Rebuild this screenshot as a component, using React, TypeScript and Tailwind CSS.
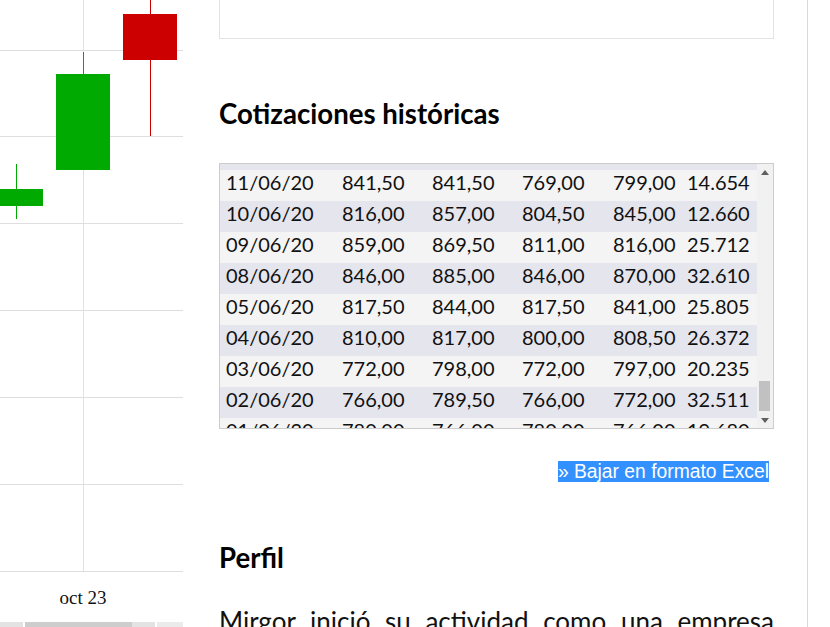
import React from 'react';

const rows: string[][] = [
  ['12/06/20', '790,00', '845,00', '785,00', '841,50', '18.203'],
  ['11/06/20', '841,50', '841,50', '769,00', '799,00', '14.654'],
  ['10/06/20', '816,00', '857,00', '804,50', '845,00', '12.660'],
  ['09/06/20', '859,00', '869,50', '811,00', '816,00', '25.712'],
  ['08/06/20', '846,00', '885,00', '846,00', '870,00', '32.610'],
  ['05/06/20', '817,50', '844,00', '817,50', '841,00', '25.805'],
  ['04/06/20', '810,00', '817,00', '800,00', '808,50', '26.372'],
  ['03/06/20', '772,00', '798,00', '772,00', '797,00', '20.235'],
  ['02/06/20', '766,00', '789,50', '766,00', '772,00', '32.511'],
  ['01/06/20', '780,00', '766,00', '780,00', '766,00', '19.680'],
];

const Chart: React.FC = () => {
  const hLines = [50, 136, 223, 310, 397, 484, 571];
  return (
    <svg width="183" height="627" className="block">
      {hLines.map((y) => (
        <line key={y} x1={0} x2={183} y1={y + 0.5} y2={y + 0.5} stroke="#dedede" />
      ))}
      <line x1={83.5} x2={83.5} y1={0} y2={571} stroke="#e2e2e2" />

      {/* candles */}
      <line x1={16.5} x2={16.5} y1={164} y2={219} stroke="#00aa00" />
      <rect x={0} y={189} width={43} height={17} fill="#00aa00" />

      <line x1={83.5} x2={83.5} y1={52} y2={74} stroke="#00aa00" />
      <rect x={56} y={74} width={54} height={96} fill="#00aa00" />

      <line x1={150.5} x2={150.5} y1={0} y2={136} stroke="#cc0000" />
      <rect x={123} y={14} width={54} height={46} fill="#cc0000" />

      <text
        x={83}
        y={604}
        textAnchor="middle"
        fontFamily="'Liberation Serif', serif"
        fontSize={19}
        fill="#111"
      >
        oct 23
      </text>

      {/* navigator scrollbar */}
      <rect x={0} y={622} width={23} height={5} fill="#e3e3e3" />
      <rect x={25} y={622} width={107} height={5} fill="#cdcdcd" />
      <rect x={132} y={622} width={23} height={5} fill="#e3e3e3" />
      <rect x={157} y={622} width={26} height={5} fill="#ebebeb" />
    </svg>
  );
};

const Arrow: React.FC<{ up?: boolean }> = ({ up }) => (
  <svg width="8" height="5" viewBox="0 0 8 5">
    <polygon points={up ? '0,5 8,5 4,0' : '0,0 8,0 4,5'} fill="#606060" />
  </svg>
);

const QuotesTable: React.FC = () => (
  <div className="flex h-[266px] w-[555px] shrink-0 border border-[#cccccc]">
    <div className="h-full w-[537px] overflow-hidden">
      <div className="-mt-[25px]">
        {rows.map((r, i) => (
          <div
            key={r[0]}
            className={`grid h-[31px] grid-cols-[116px_90px_90px_91px_74px_1fr] pl-[6px] pt-[2px] text-[20px] leading-[20px] text-[#111] ${
              i % 2 === 0 ? 'bg-[#e5e5ed]' : 'bg-[#f4f4f4]'
            }`}
          >
            {r.map((c, j) => (
              <span key={j}>{c}</span>
            ))}
          </div>
        ))}
      </div>
    </div>
    <div className="flex h-full w-[16px] flex-col bg-[#f1f1f1]">
      <div className="flex h-[16px] items-center justify-center">
        <Arrow up />
      </div>
      <div className="flex flex-1 flex-col justify-end pb-[1px]">
        <div className="ml-[2px] h-[30px] w-[11px] bg-[#c1c1c1]" />
      </div>
      <div className="flex h-[16px] items-center justify-center">
        <Arrow />
      </div>
    </div>
  </div>
);

export default function App() {
  return (
    <div className="flex h-[627px] w-[830px] overflow-hidden bg-white font-[Lato,sans-serif]">
      <div className="w-[183px] shrink-0">
        <Chart />
      </div>

      <div className="ml-[36px] flex w-[555px] shrink-0 flex-col">
        <div className="h-[39px] shrink-0 border-x border-b border-[#e3e3e3]" />

        <h2 className="mt-[58px] shrink-0 text-[27.6px] font-bold leading-[34px] text-black">
          Cotizaciones históricas
        </h2>

        <div className="mt-[32px] shrink-0">
          <QuotesTable />
        </div>

        <div className="mt-[29px] shrink-0 pr-[5px] text-right font-['Liberation_Sans',Arial,sans-serif] text-[19.3px] leading-normal">
          <span className="bg-[#3390ff] text-white">» Bajar en formato Excel</span>
        </div>

        <h2 className="mt-[54px] shrink-0 text-[27.6px] font-bold leading-[34px] text-black">
          Perfil
        </h2>

        <p className="mt-[27px] shrink-0 text-justify text-[26px] leading-[39px] text-[#111]">
          Mirgor inició su actividad como una empresa fabricante de equipos de climatización
          para automotores en la provincia de Tierra del Fuego.
        </p>
      </div>

      <div className="ml-[33px] w-px shrink-0 bg-[#d9d9d9]" />
    </div>
  );
}
